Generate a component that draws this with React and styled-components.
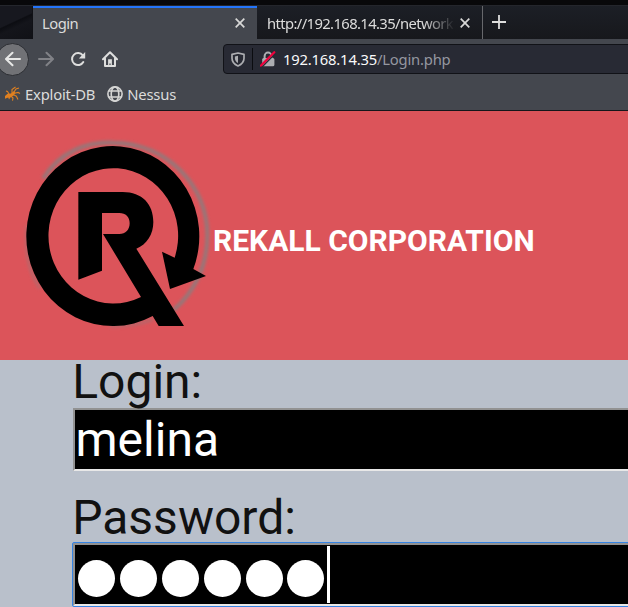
import React from "react";
import styled, { createGlobalStyle } from "styled-components";

const GlobalStyle = createGlobalStyle`
  * { box-sizing: border-box; }
  body { margin: 0; overflow: hidden; }
`;

const Window = styled.div`
  width: 628px;
  height: 607px;
  overflow: hidden;
  display: flex;
  flex-direction: column;
  background: #b9c0cb;
`;

const Chrome = styled.div`
  height: 111px;
  flex: none;
  background: #44474e;
  border-bottom: 1px solid #15161a;
  font-family: "Noto Sans", sans-serif;
  font-size: 14.8px;
  letter-spacing: -0.2px;
  color: #dcdcdb;
`;

const TitleStrip = styled.div`
  height: 6px;
  background: #08080a;
  border-bottom: 1px solid #24262c;
`;

const TabBar = styled.div`
  height: 33px;
  display: flex;
  background: linear-gradient(#1c1f26, #17181c);
`;

const Desktop = styled.div`
  width: 33px;
  border-right: 1px solid #101116;
  background: linear-gradient(155deg, #17181f 45%, #0c0d12 48%, #14151b 60%, #101116);
`;

const Tab = styled.div`
  width: ${(p) => p.$width}px;
  display: flex;
  align-items: center;
  padding: ${(p) => (p.$active ? "0 12px 1px 9px" : "1px 12px 0 10px")};
  background: ${(p) => (p.$active ? "#44474e" : "transparent")};
  border-top: ${(p) => (p.$active ? "2px solid #2475fa" : "0")};
  border-right: ${(p) => (p.$active ? "0" : "1px solid #67686c")};
`;

const TabLabel = styled.span`
  flex: 1;
  min-width: 0;
  white-space: nowrap;
  line-height: 22px;
  letter-spacing: -0.5px;
  ${(p) => p.$fade && "letter-spacing: -0.62px; mask-image: linear-gradient(90deg, #000 84%, transparent 101%);"}
`;

const NewTab = styled.div`
  padding: 9px 0 0 9px;
  line-height: 0;
`;

const Toolbar = styled.div`
  height: 40px;
  display: flex;
  align-items: center;
`;

const BackButton = styled.div`
  width: 33px;
  height: 33px;
  margin-left: -4px;
  border-radius: 50%;
  border: 1px solid #2c2e33;
  background: #717276;
  display: grid;
  place-items: center;
`;

const NavIcons = styled.div`
  width: 194px;
  padding-left: 9px;
  display: flex;
  gap: 16px;
`;

const AddressBar = styled.div`
  flex: 1;
  height: 30px;
  margin-right: -5px;
  display: flex;
  align-items: center;
  background: #282a34;
  border: 1px solid #111217;
  border-radius: 4px;
  padding-left: 7px;
`;

const Divider = styled.div`
  width: 1px;
  height: 22px;
  margin: 0 7px 0 7px;
  background: #0b0c10;
`;

const Address = styled.span`
  margin-left: 7px;
  color: #f9f9fa;
`;

const Path = styled.span`
  color: #9597a0;
`;

const Bookmarks = styled.div`
  height: 31px;
  display: flex;
  align-items: center;
  padding: 0 0 1px 4px;
`;

const Bookmark = styled.div`
  display: flex;
  align-items: center;
  gap: 4px;
  margin-right: 12px;
`;

const Header = styled.header`
  height: 249px;
  flex: none;
  display: flex;
  background: #dc545a;
`;

const LogoBox = styled.div`
  width: 213px;
  padding: 14px 0 0 10px;
`;

const CompanyName = styled.h1`
  margin: 111px 0 0;
  font: bold 30px/38px Roboto, sans-serif;
  color: #fff;
  white-space: nowrap;
`;

const Form = styled.form`
  width: 700px;
  padding-left: 73px;
  font-family: Roboto, sans-serif;
  font-size: 48px;
`;

const Label = styled.label`
  display: block;
  height: ${(p) => p.$height}px;
  padding-top: ${(p) => p.$top}px;
  margin-left: -0.8px;
  line-height: 44px;
  color: #111;
`;

const Field = styled.div`
  height: 63px;
  width: 640px;
  display: flex;
  align-items: center;
  padding: 0 ${(p) => (p.$focused ? 1 : 0.5)}px;
  background: #000;
  color: #fff;
  border: 2px solid;
  border-color: #929292 #e8e8e8 #e8e8e8 #929292;
  line-height: 57px;
  ${(p) => p.$focused && "outline: 1px solid #3584e4; border-radius: 1px;"}
`;

const Dot = styled.span`
  width: 37px;
  height: 37px;
  margin: 7px 2.4px 0;
  border-radius: 50%;
  background: #fff;
`;

const Caret = styled.span`
  width: 3px;
  height: 57px;
  background: #fff;
`;

const CloseIcon = () => (
  <svg width="10" height="10" viewBox="0 0 10 10" stroke="#d8d8d7" strokeWidth="1.7">
    <path d="M.7.7 9.3 9.3M9.3.7.7 9.3" />
  </svg>
);

const ArrowIcon = ({ flip, color }) => (
  <svg width="16" height="16" viewBox="0 0 16 16" fill="none" stroke={color} strokeWidth="2" strokeLinecap="round" strokeLinejoin="round">
    <path d={flip ? "M1 8h13.6M8.5 1.7 15 8l-6.5 6.3" : "M15 8H1.4M7.5 1.7 1 8l6.5 6.3"} />
  </svg>
);

const ReloadIcon = () => (
  <svg width="16" height="16" viewBox="0 0 16 16">
    <path d="M12.8 4.4A6 6 0 1 0 13.3 11" fill="none" stroke="#dededd" strokeWidth="2" strokeLinecap="round" />
    <path d="M15.2 1v6.6H8.8Z" fill="#dededd" />
  </svg>
);

const HomeIcon = () => (
  <svg width="16" height="16" viewBox="0 0 16 16">
    <path d="M1 8.2 8 1.2l7 7M3 7.5v7.4h10V7.5" fill="none" stroke="#dededd" strokeWidth="2" strokeLinecap="round" strokeLinejoin="round" />
    <path d="M6.1 8.2h3.8v6.2H8.6v-2H7.4v2H6.1Z" fill="#dededd" />
  </svg>
);

const ShieldIcon = () => (
  <svg width="14" height="15" viewBox="0 0 14 15">
    <path d="M7 1 13 2.3v3.9c0 3.6-2.2 6-6 7.8-3.8-1.8-6-4.2-6-7.8V2.3Z" fill="none" stroke="#acadb1" strokeWidth="1.7" strokeLinejoin="round" />
    <path d="M7 3.7v7.4c-2-1.2-3.1-2.8-3.1-4.9V4.4Z" fill="#acadb1" />
  </svg>
);

const InsecureIcon = () => (
  <svg width="16" height="16" viewBox="0 0 16 16">
    <path d="M4.6 8V5a3.4 3.4 0 0 1 6.8 0v3" fill="none" stroke="#acadb1" strokeWidth="2" />
    <rect x="2.2" y="7" width="12.2" height="8.2" rx="1.5" fill="#acadb1" />
    <path d="M2 16 15.6 2.2" stroke="#282a34" strokeWidth="1.4" />
    <path d="M1 14.6 14.3 1.2" stroke="#f0003c" strokeWidth="2.2" strokeLinecap="round" />
  </svg>
);

const BugIcon = () => (
  <svg width="17" height="16" viewBox="0 0 17 16">
    <path d="M1 10 3.5 7.8 7 7.5l2.6-2.3 2 1.6L9.4 9.8l-2.2.8L5 13.5l-.8-2L1 12.7Z" fill="#e08020" />
    <path d="M5 8 3.5 5.5 2 5M8 7.5 8 3.5 11.5 1M10 6l2-3 3-1M10.5 7.2l3.6-.8L16 7.5M9 8.6l3.4 1.6 1.6 3.3M7 10l2 2-.5 2.7" fill="none" stroke="#e08020" strokeWidth="1.1" />
  </svg>
);

const GlobeIcon = () => (
  <svg width="16" height="16" viewBox="0 0 16 16" fill="none" stroke="#d5d5d4" strokeWidth="1.6">
    <circle cx="8" cy="8" r="7.1" />
    <ellipse cx="8" cy="8" rx="3.8" ry="7.1" />
    <path d="M1.8 5h12.4M1.8 11h12.4" />
  </svg>
);

const RekallLogo = () => (
  <svg width="203" height="215" viewBox="0 0 609 645">
    <defs>
      <filter id="soft" x="-10%" y="-10%" width="120%" height="120%">
        <feGaussianBlur stdDeviation="5" />
      </filter>
    </defs>
    <path d="M100 160C150 80 230 50 310 53C470 55 592 180 592 330C592 420 555 500 490 556" fill="none" stroke="#957779" strokeWidth="12" filter="url(#soft)" />
    <path d="M52 300C43 400 63 450 90 490M300 604Q380 603 430 583" fill="none" stroke="#b86569" strokeWidth="9" filter="url(#soft)" />
    <path d="M550 432L588 453L480 492L456 380L494 398A194.5 203 0 1 0 393 516L279 327H328C347 327 359 314 359 295C359 276 347 264 328 264H276V437L205 464V201H338C397 201 430 238 430 291C430 328 411 358 379 371L522 603H446L428 573A259.5 270 0 1 1 550 432Z" />
  </svg>
);

export default function App() {
  return (
    <Window>
      <GlobalStyle />
      <Chrome>
        <TitleStrip />
        <TabBar>
          <Desktop />
          <Tab $active $width={224}>
            <TabLabel>Login</TabLabel>
            <CloseIcon />
          </Tab>
          <Tab $width={226}>
            <TabLabel $fade>http://192.168.14.35/network</TabLabel>
            <svg width="7" height="1" />
            <CloseIcon />
          </Tab>
          <NewTab>
            <svg width="14" height="14" viewBox="0 0 14 14" stroke="#dededd" strokeWidth="1.8">
              <path d="M7 0v14M0 7h14" />
            </svg>
          </NewTab>
        </TabBar>
        <Toolbar>
          <BackButton><ArrowIcon color="#e8e8e7" /></BackButton>
          <NavIcons>
            <ArrowIcon flip color="#818287" />
            <ReloadIcon />
            <HomeIcon />
          </NavIcons>
          <AddressBar>
            <ShieldIcon />
            <Divider />
            <InsecureIcon />
            <Address>192.168.14.35<Path>/Login.php</Path></Address>
          </AddressBar>
        </Toolbar>
        <Bookmarks>
          <Bookmark><BugIcon />Exploit-DB</Bookmark>
          <Bookmark><GlobeIcon />Nessus</Bookmark>
        </Bookmarks>
      </Chrome>
      <Header>
        <LogoBox><RekallLogo /></LogoBox>
        <CompanyName>REKALL CORPORATION</CompanyName>
      </Header>
      <Form>
        <Label $height={48}>Login:</Label>
        <Field>melina</Field>
        <Label $height={72} $top={25}>Password:</Label>
        <Field $focused>
          {[0, 1, 2, 3, 4, 5].map((i) => <Dot key={i} />)}
          <Caret />
        </Field>
      </Form>
    </Window>
  );
}
